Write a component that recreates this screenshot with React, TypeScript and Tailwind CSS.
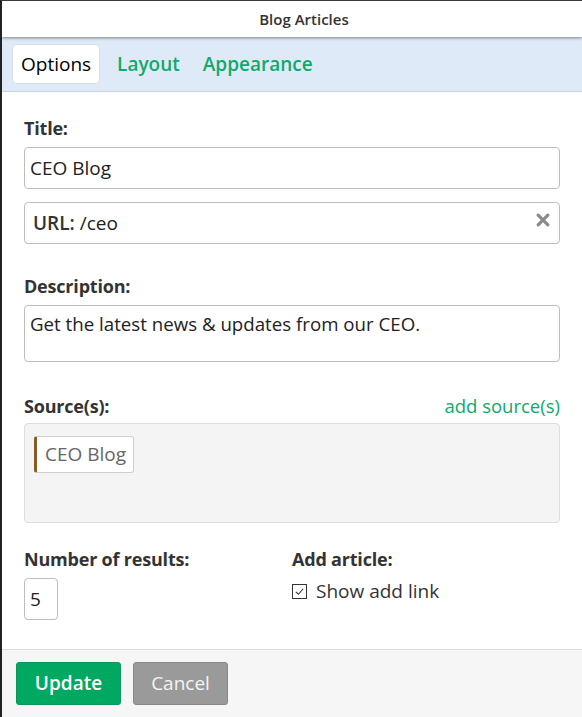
const FONT = "font-['Open_Sans',sans-serif]";

function Label({ children }: { children: React.ReactNode }) {
  return <div className="text-[18px] font-bold text-[#333] leading-6 tracking-[-0.2px]">{children}</div>;
}

export default function App() {
  return (
    <div className={`${FONT} w-[582px] h-[717px] bg-white flex flex-col border-t border-t-[#3a3a3a] border-l-2 border-l-[#222] overflow-hidden`}>
      {/* Header */}
      <div className="h-[36px] flex items-center justify-center pl-[24px] text-[15px] font-semibold text-[#333] shadow-[0_1px_3px_rgba(0,0,0,0.45)] relative z-10">
        Blog Articles
      </div>

      {/* Tabs */}
      <div className="h-[55px] bg-[#dfeaf8] border-b border-[#c6d4e4] flex items-center gap-2 px-[10px]">
        <div className="h-[40px] px-[8px] flex items-center bg-white border border-[#d4dde8] rounded-[4px] text-[19px] font-medium text-black">
          Options
        </div>
        <div className="px-[9px] text-[19px] font-semibold text-[#10a96a]">Layout</div>
        <div className="px-[6px] text-[19px] font-semibold text-[#10a96a]">Appearance</div>
      </div>

      {/* Content */}
      <div className="flex-1 px-[22px] pt-[24px] flex flex-col">
        <Label>Title:</Label>
        <div className="mt-[7px] h-[42px] border border-[#bdbdbd] rounded-[4px] flex items-center px-[5px] text-[19px] text-[#222]">
          CEO Blog
        </div>
        <div className="mt-[13px] h-[42px] border border-[#bdbdbd] rounded-[4px] flex items-center px-[8px] text-[19px] text-[#222]">
          <span className="font-semibold text-[#333]">URL:</span>
          <span className="ml-[5px]">/ceo</span>
          <svg viewBox="0 0 16 16" className="ml-auto w-[14px] h-[14px] -mt-[6px] mr-[1px]">
            <path d="M2.5 2.5 L13.5 13.5 M13.5 2.5 L2.5 13.5" stroke="#8a8a8a" strokeWidth="3.6" strokeLinecap="round" />
          </svg>
        </div>

        <div className="mt-[30px]">
          <Label>Description:</Label>
        </div>
        <div className="mt-[7px] h-[57px] border border-[#bdbdbd] rounded-[4px] px-[5px] pt-[6px] text-[18.7px] text-[#222] leading-6">
          Get the latest news &amp; updates from our CEO.
        </div>

        <div className="mt-[30px] flex items-center justify-between">
          <Label>Source(s):</Label>
          <span className="text-[18.5px] text-[#10a96a]">add source(s)</span>
        </div>
        <div className="mt-[3px] h-[100px] bg-[#f4f4f4] border border-[#dedede] rounded-[4px] p-[12px] pl-[9px]">
          <div className="inline-flex items-center h-[37px] bg-white border border-[#cfcfcf] border-l-[3px] border-l-[#8a5a22] rounded-[3px] pl-[8px] pr-[7px] text-[19px] text-[#666]">
            CEO Blog
          </div>
        </div>

        <div className="mt-[24px] flex">
          <div className="w-[268px]">
            <Label>Number of results:</Label>
            <div className="mt-[7px] w-[34px] h-[42px] border border-[#bdbdbd] rounded-[4px] flex items-center px-[5px] text-[19px] text-[#222]">
              5
            </div>
          </div>
          <div>
            <Label>Add article:</Label>
            <div className="mt-[6px] flex items-center gap-[9px]">
              <div className="w-[15px] h-[15px] border border-[#333] flex items-center justify-center">
                <svg viewBox="0 0 12 12" className="w-[11px] h-[11px]">
                  <path d="M2 6.5 L4.8 9 L10 3" fill="none" stroke="#333" strokeWidth="1.2" />
                </svg>
              </div>
              <span className="text-[19px] text-[#333]">Show add link</span>
            </div>
          </div>
        </div>
      </div>

      {/* Footer */}
      <div className="h-[68px] bg-[#f6f6f6] border-t border-[#dcdcdc] flex items-center gap-[12px] px-[14px]">
        <button className="h-[43px] w-[105px] bg-[#00a862] border border-[#08965a] rounded-[3px] text-white text-[19px] font-semibold">
          Update
        </button>
        <button className="h-[43px] w-[95px] bg-[#9a9a9a] border border-[#888] rounded-[3px] text-[#f4f4f4] text-[19px]">
          Cancel
        </button>
      </div>
    </div>
  );
}
